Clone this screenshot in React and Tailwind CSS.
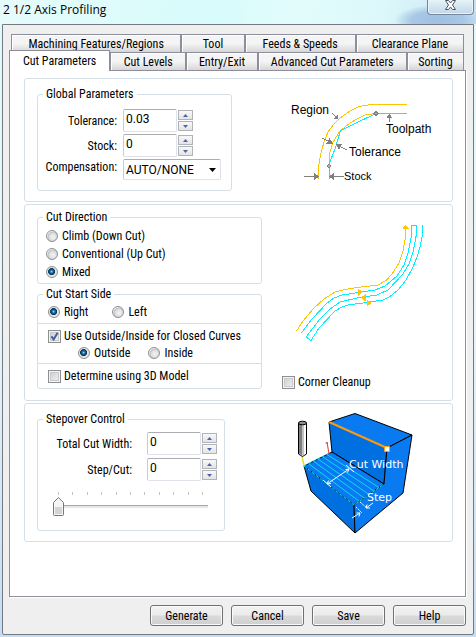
import React, { useState } from 'react'

const BACK_TABS = ['Machining Features/Regions', 'Tool', 'Feeds & Speeds', 'Clearance Plane']
const FRONT_TABS = ['Cut Parameters', 'Cut Levels', 'Entry/Exit', 'Advanced Cut Parameters', 'Sorting']
const ACTIONS = ['Generate', 'Cancel', 'Save', 'Help']

const TICKS = Array.from({ length: 11 }, (_, i) => i)

const Tab = ({ label, active, onClick }) => (
  <button
    type="button"
    role="tab"
    aria-selected={active}
    onClick={onClick}
    className={
      active
        ? 'relative z-10 -ml-0.5 -mt-0.5 -mb-px h-[21px] border border-b-0 border-[#8c8e9c] bg-white whitespace-nowrap'
        : 'h-[18px] border border-b-0 border-[#8c8e9c] bg-linear-to-b from-[#f4f4f4] from-50% to-[#d6d6d6] shadow-[inset_1px_1px_0_#fff] whitespace-nowrap'
    }
  >
    {label}
  </button>
)

const Group = ({ title, className = '', children }) => (
  <fieldset className={`rounded-[3px] border border-[#d5dfe8] ${className}`}>
    <legend className="ml-[5px] px-[3px] leading-[14px]">{title}</legend>
    {children}
  </fieldset>
)

const Section = ({ className = '', children }) => (
  <section className={`flex rounded-[3px] border border-[#d5dfe8] pl-3 ${className}`}>{children}</section>
)

const SpinButton = ({ up, label, onClick }) => (
  <button
    type="button"
    aria-label={label}
    onClick={onClick}
    className="flex h-[10px] w-[15px] items-center justify-center border border-[#b0b3b8] bg-linear-to-b from-[#f8f8f8] to-[#e4e4e6]"
  >
    <svg width="5" height="3" viewBox="0 0 5 3" aria-hidden="true">
      <path d={up ? 'M0 3L2.5 0L5 3Z' : 'M0 0L2.5 3L5 0Z'} fill="#4a62b0" />
    </svg>
  </button>
)

const SpinField = ({ id, label, initial, step = 1 }) => {
  const [value, setValue] = useState(initial)
  const bump = (d) => setValue((v) => String(Math.round((Number(v) + d) * 100) / 100))
  return (
    <div className="flex items-center justify-end">
      <label htmlFor={id} className="mr-[6px]">{label}</label>
      <input
        id={id}
        value={value}
        onChange={(e) => setValue(e.target.value)}
        className="h-[23px] w-[54px] rounded-[2px] border border-[#dfe2ea] border-t-[#abadb3] border-l-[#c9cbd3] bg-white pb-[3px] pl-[2px] font-['Roboto',sans-serif] text-[12px] outline-none"
      />
      <div className="ml-px flex flex-col gap-px">
        <SpinButton up label={`Increase ${label}`} onClick={() => bump(step)} />
        <SpinButton label={`Decrease ${label}`} onClick={() => bump(-step)} />
      </div>
    </div>
  )
}

const Radio = ({ name, label, defaultChecked, className = '' }) => (
  <label className={`flex h-[18px] items-center gap-1 ${className}`}>
    <input
      type="radio"
      name={name}
      defaultChecked={defaultChecked}
      className="h-3 w-3 appearance-none rounded-full border border-[#8e8f8f] bg-[radial-gradient(circle_at_60%_60%,#f4f4f4_0,#dcdde0_45%,#b9bcc0_60%,#f4f4f4_68%)] checked:bg-[radial-gradient(circle_at_46%_46%,#8fe0fb_0,#1e78ac_18%,#0d3a5c_36%,#0d3a5c_42%,#e4e6e8_50%)]"
    />
    {label}
  </label>
)

const Check = ({ label, defaultChecked, className = '' }) => (
  <label className={`flex items-center gap-[3px] ${className}`}>
    <span className="relative h-[13px] w-[13px]">
      <input
        type="checkbox"
        defaultChecked={defaultChecked}
        className="peer block h-[13px] w-[13px] appearance-none border border-[#8e8f8f] bg-linear-to-br from-[#c6cace] to-[#f6f6f6] shadow-[inset_0_0_0_1px_#f4f4f4,inset_0_0_0_2px_#c8cacd]"
      />
      <svg
        className="pointer-events-none absolute inset-0 hidden peer-checked:block"
        width="13"
        height="13"
        viewBox="0 0 13 13"
        aria-hidden="true"
      >
        <path d="M3.4 6.4L5.6 9.4L9.6 2.8" fill="none" stroke="#4a5f97" strokeWidth="2" />
      </svg>
    </span>
    {label}
  </label>
)

const StepSlider = () => {
  const [value, setValue] = useState(0)
  return (
    <div className="relative mr-4 ml-[15px] mt-[11px] h-[25px]">
      <div className="flex justify-between pr-[5px] pl-[5px]">
        {TICKS.map((t) => (
          <span key={t} className="h-[3px] w-px bg-[#c4c4c4]" />
        ))}
      </div>
      <div className="mt-[10px] ml-[5px] h-[3px] border-t border-[#a4aaaa] bg-[#e3e9e9]" />
      <div className="absolute inset-x-0 top-[5px] mr-[10px]">
        <svg width="11" height="19" viewBox="0 0 11 19" style={{ marginLeft: `${value * 10}%` }} aria-hidden="true">
          <path d="M0.5 5.5L5.5 0.5L10.5 5.5V17.5Q10.5 18.5 9.5 18.5H1.5Q0.5 18.5 0.5 17.5Z" fill="#f5f5f5" stroke="#777" />
          <path d="M2 10H9V17H2Z" fill="#d4d4d4" />
        </svg>
      </div>
      <input
        type="range"
        aria-label="Step/Cut"
        min="0"
        max="10"
        value={value}
        onChange={(e) => setValue(Number(e.target.value))}
        className="absolute inset-0 h-full w-full opacity-0"
      />
    </div>
  )
}

const ToleranceDrawing = () => (
  <svg
    width="146"
    height="86"
    viewBox="0 0 146 86"
    fill="none"
    shapeRendering="crispEdges"
    className="shrink-0"
    role="img"
    aria-label="Tolerance and stock"
  >
    <path d="M117 6.5H81L69 8.5L60 13L50 20L44 26L38 34L34 44L32 51L29.5 62L28.5 70V81" stroke="#ffc400" />
    <path d="M86 15.5L75 17L67 21L60 25L50 33L43 44L40 54L39 67" stroke="#ffc400" />
    <path d="M117 15.5H86L50.5 32.5L45 51L39 66V81" stroke="#00f0ff" />
    <g stroke="#808080" fill="#808080">
      <path d="M42 15L47 20M99.500 24V19M57 52L50 48.500M32 40L38 43M14 78.500H24M54 78.500H43" />
      <path d="M48 21L44 20.500L47.500 17ZM99.500 15.500L96.500 20H102.500ZM46 46L52 45.500L49 51.500ZM43 45.500L36.500 45.500L39.500 40ZM29 78.500L24 75V82ZM39 78.500L43.500 75V82Z" stroke="none" />
      <path d="M86 13.500L88 15.500L86 17.500L84 15.500ZM39 66L41 68L39 70L37 68Z" fill="#b4b4b4" />
    </g>
    <g fill="#000" fontFamily="Liberation Sans, Arial, sans-serif" fontSize="12">
      <text x="1" y="16">Region</text>
      <text x="96" y="35">Toolpath</text>
      <text x="59" y="58">Tolerance</text>
      <text x="54" y="82" fontSize="11">Stock</text>
    </g>
  </svg>
)

const DirectionDrawing = () => (
  <svg
    width="140"
    height="124"
    viewBox="0 0 140 124"
    fill="none"
    shapeRendering="crispEdges"
    className="shrink-0"
    role="img"
    aria-label="Cut direction"
  >
    <path d="M6.500 110L13 100L23 88L34 78L45 71L55 68.500L67 66.500L88 64L96 59.500L102 53L109 42L113 30L115.500 16V5" stroke="#ffc400" />
    <g stroke="#00f0ff">
      <path d="M11.500 112L22 98L37 82L44 77L52 74L72 71L85 69L95 65L107 55L114 44L118 32L121 17V4.500H126.500V13L123 31L119 43L113 53L98 69L87 74L67 77L50 81L40 88L30 98L16 116L21 119.500L29 107L45 90L52 86L58 84L80 81L93 79L100 75.500L108 69L116 59L123 46L127 36L130 26L132.500 14V4" />
    </g>
    <path d="M68 67.500V75L72.500 71ZM75.500 73V80.500L71 76.500ZM77 78.500V85.500L81.500 82ZM112.500 8H119L115.500 3.500Z" fill="#ffc400" />
  </svg>
)

const StepoverDrawing = () => (
  <svg width="126" height="123" viewBox="0 0 126 123" fill="none" className="shrink-0" role="img" aria-label="Stepover">
    <g stroke="#000" strokeLinejoin="round">
      <path d="M39 10L65 1.500L122 23L97 36Z" fill="#0a7af0" />
      <path d="M39 10L97 36L94 72L42 40Z" fill="#0070e0" />
      <path d="M42 40L94 72L64 93L14 54Z" fill="#0a7af0" />
      <path d="M14 54L64 93L65 121L21 79Z" fill="#0070e0" />
      <path d="M122 23L113 81L65 121L64 93L94 72L97 36Z" fill="#0a7af0" />
    </g>
    <g stroke="#10d8f8">
      <path d="M14 54L64 93L94 72" strokeDasharray="4 1" />
      <path d="M19 52L69 89M24 49.500L74 86M28 47L79 82.500M33 45L84 79M37 42.500L89 75.500" />
      <path d="M14 54L40 41" strokeDasharray="3 2" />
    </g>
    <path d="M39 10L97 36" stroke="#ff9a10" strokeWidth="2" />
    <path d="M94.500 34.500H99.500V39.500H94.500Z" fill="#fff" stroke="#ff9a10" />
    <path d="M37 30L39 42M35.500 31H38" stroke="#e03838" />
    <path d="M12 44L14 54" stroke="#e8e020" strokeWidth="1.500" />
    <path d="M8.500 11V42L12.500 44.500L16.500 42V11Z" fill="#fff" stroke="#000" />
    <path d="M9 12H12.500V43.500L9 41.500Z" fill="#808080" />
    <path d="M12.500 12H14V43L12.500 43.500Z" fill="#c4c4c4" />
    <ellipse cx="12.500" cy="11" rx="4" ry="1.800" fill="#909090" stroke="#000" />
    <g stroke="#fff">
      <path d="M37 72L59 57M33 68L41 75M56 53L64 60M41 71.500L37 72L38.500 68.500M55.500 57.500L59 57L57.500 60.500" />
      <path d="M62 106L70 101M83 91L76 96M66.500 101L70 101L69 104.500M77 92.500L76 96L80 96" />
      <path d="M66 95L72 101M70 90L77 96" strokeDasharray="2 1" />
    </g>
    <g fill="#fff" fontFamily="DejaVu Sans, Verdana, sans-serif" fontSize="11">
      <text x="59" y="56">Cut Width</text>
      <text x="77" y="89">Step</text>
    </g>
  </svg>
)

const App = () => {
  const [tab, setTab] = useState('Cut Parameters')

  return (
    <div className="flex min-h-screen flex-col bg-linear-to-b from-[#dffafc] via-[#e8f6fb] to-[#c5dcf2] pr-[2px] pb-[2px] pl-[2px] font-['Roboto_Condensed','Roboto',sans-serif] text-[12px] leading-[14px] text-black">
      <header className="-mx-[2px] flex h-6 items-start justify-between bg-[radial-gradient(ellipse_44px_16px_at_92%_85%,#9dbfe2_0%,#a9c8e6_60%,transparent_100%),linear-gradient(100deg,#e6fbfc_0%,#d8fbfb_45%,#e2fcfc_62%,#dcf8fa_80%,#c9e2f2_100%)] pl-[3px]">
        <h1 className="pt-[2px] font-['Open_Sans',sans-serif] text-[12px] leading-4">2 1/2 Axis Profiling</h1>
        <button
          type="button"
          aria-label="Close"
          className="mr-[2px] flex h-[15px] w-[47px] items-start justify-center rounded-b-[4px] border border-t-0 border-[#75879b] bg-linear-to-b from-[#e4f4f8] to-[#c3d6ea] shadow-[inset_0_0_0_1px_#e9f3fa]"
        >
          <svg width="13" height="11" viewBox="0 0 13 11" aria-hidden="true">
            <path d="M1.500 0.500H4.500L6.500 3L8.500 0.500H11.500L8.500 5L11.500 9.500H8.500L6.500 7L4.500 9.500H1.500L4.500 5Z" fill="#fff" stroke="#50545c" />
          </svg>
        </button>
      </header>

      <main className="flex grow flex-col rounded-b-[2px] border border-[#757a80] bg-[#efefef] pr-[7px] pl-[6px]">
        <div role="tablist" className="mt-[9px] mr-[2px] ml-[2px]">
          <div className="grid grid-cols-[170fr_63fr_111fr_108fr]">
            {BACK_TABS.map((t) => (
              <Tab key={t} label={t} active={t === tab} onClick={() => setTab(t)} />
            ))}
          </div>
          <div className="grid grid-cols-[99fr_76fr_71fr_149fr_57fr]">
            {FRONT_TABS.map((t) => (
              <Tab key={t} label={t} active={t === tab} onClick={() => setTab(t)} />
            ))}
          </div>
        </div>

        <div
          role="tabpanel"
          className="flex grow flex-col gap-[2px] border border-[#8c8e9c] bg-white pt-[7px] pr-[12px] pl-[14px] shadow-[1px_1px_0_#fff]"
        >
          <Section className="gap-[58px] pt-[8px] pb-[10px]">
            <Group title="Global Parameters" className="w-[195px] pb-[10px]">
              <div className="mt-2 flex flex-col gap-[2px] pr-[38px]">
                <SpinField id="tolerance" label="Tolerance:" initial="0.03" step={0.01} />
                <SpinField id="stock" label="Stock:" initial="0" />
              </div>
              <div className="mt-[2px] flex items-start justify-end pr-[10px]">
                <label htmlFor="compensation" className="mr-[6px] pt-px">Compensation:</label>
                <div className="relative">
                  <select
                    id="compensation"
                    className="block h-[21px] w-[98px] appearance-none rounded-[2px] border border-[#dfe2ea] border-t-[#abadb3] border-l-[#c9cbd3] bg-white pl-[2px] font-['Roboto',sans-serif] text-[12px] leading-[14px]"
                  >
                    <option>AUTO/NONE</option>
                  </select>
                  <svg className="pointer-events-none absolute top-[9px] right-[5px]" width="7" height="4" viewBox="0 0 7 4" aria-hidden="true">
                    <path d="M0 0H7L3.500 4Z" fill="#000" />
                  </svg>
                </div>
              </div>
            </Group>
            <div className="pt-[11px]">
              <ToleranceDrawing />
            </div>
          </Section>

          <Section className="gap-[20px] pt-[5px] pb-[11px]">
            <div className="w-[225px]">
              <Group title="Cut Direction" className="pb-[2px]">
                <div className="mt-[3px] pl-2">
                  <Radio name="direction" label="Climb (Down Cut)" />
                  <Radio name="direction" label="Conventional (Up Cut)" />
                  <Radio name="direction" label="Mixed" defaultChecked />
                </div>
              </Group>
              <Group title="Cut Start Side" className="mt-[3px]">
                <div className="mt-[2px] flex gap-[24px] pb-[2px] pl-[10px]">
                  <Radio name="side" label="Right" defaultChecked />
                  <Radio name="side" label="Left" />
                </div>
                <div className="border-y border-[#d5dfe8] pt-[5px]">
                  <Check label="Use Outside/Inside for Closed Curves" defaultChecked className="ml-[10px]" />
                  <div className="flex gap-[18px] py-px pl-[40px]">
                    <Radio name="closed" label="Outside" defaultChecked />
                    <Radio name="closed" label="Inside" />
                  </div>
                </div>
                <Check label="Determine using 3D Model" className="ml-[10px] py-[5px]" />
              </Group>
            </div>
            <div className="flex flex-col justify-between pt-[11px]">
              <div className="pl-[8px]">
                <DirectionDrawing />
              </div>
              <Check label="Corner Cleanup" />
            </div>
          </Section>

          <Section className="gap-[65px] pt-[8px] pb-[6px]">
            <Group title="Stepover Control" className="w-[188px] self-start pb-[13px]">
              <div className="mt-[6px] flex flex-col gap-[3px] pr-[7px] [&_label]:mr-[15px]">
                <SpinField id="width" label="Total Cut Width:" initial="0" />
                <SpinField id="step" label="Step/Cut:" initial="0" />
              </div>
              <StepSlider />
            </Group>
            <StepoverDrawing />
          </Section>
        </div>

        <footer className="flex h-[37px] justify-end gap-2 pt-2">
          {ACTIONS.map((a) => (
            <button
              key={a}
              type="button"
              className="h-[21px] w-[73px] rounded-[3px] border border-[#707070] bg-[linear-gradient(#f2f2f2_0%,#ebebeb_48%,#dadada_52%,#cfcfcf_100%)] shadow-[inset_0_0_0_1px_#fafafa]"
            >
              {a}
            </button>
          ))}
        </footer>
      </main>
    </div>
  )
}

export default App
